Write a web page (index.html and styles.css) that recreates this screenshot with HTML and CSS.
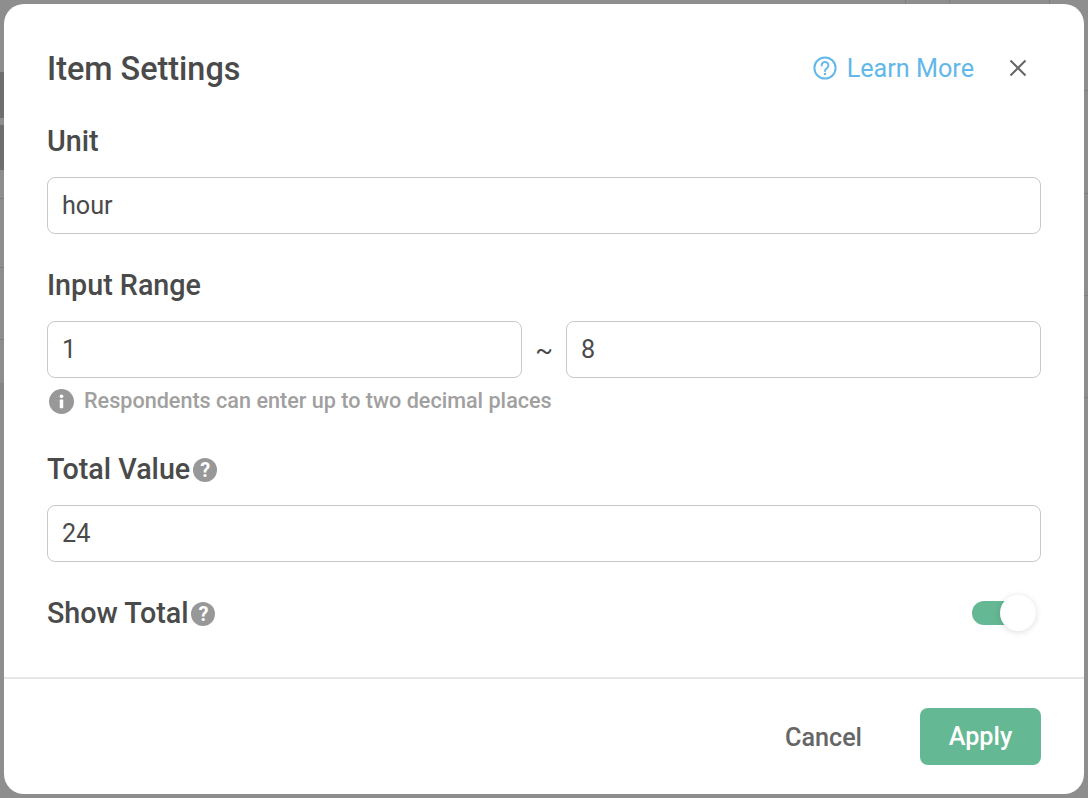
FILE: index.html
```html
<!DOCTYPE html>
<html lang="en">
<head>
	<meta charset="UTF-8">
	<title>Item Settings</title>
	<link rel="stylesheet" href="styles.css">
</head>
<body>
	<div class="modal">
		<div class="modal-body">
			<div class="modal-head">
				<h2 class="title">Item Settings</h2>
				<a class="learn">
					<svg class="learn-icon" viewBox="0 0 24 24" fill="none" stroke="#62b8e8" stroke-width="2" stroke-linecap="round">
						<circle cx="12" cy="12" r="10.6"/>
						<path d="M8.6 9.4a3.4 3.4 0 1 1 5.2 2.9c-1.2.8-1.8 1.3-1.8 2.6"/>
						<circle cx="12" cy="18" r="1.2" fill="#62b8e8" stroke="none"/>
					</svg>
					Learn More
				</a>
				<svg class="close" viewBox="0 0 18 18" fill="none" stroke="#666" stroke-width="2">
					<path d="M1.5 1.5l15 15M16.5 1.5l-15 15"/>
				</svg>
			</div>

			<label class="label label-unit">Unit</label>
			<div class="field">hour</div>

			<label class="label label-range">Input Range</label>
			<div class="range">
				<div class="field">1</div>
				<span class="tilde">~</span>
				<div class="field">8</div>
			</div>
			<div class="hint">
				<svg class="hint-icon" viewBox="0 0 26 26">
					<circle cx="13" cy="13" r="13" fill="#989898"/>
					<circle cx="13" cy="7.6" r="1.9" fill="#fff"/>
					<rect x="11.2" y="11" width="3.6" height="9" rx=".6" fill="#fff"/>
				</svg>
				Respondents can enter up to two decimal places
			</div>

			<label class="label label-total">Total Value<span class="qmark">?</span></label>
			<div class="field">24</div>

			<div class="show-row">
				<label class="label">Show Total<span class="qmark">?</span></label>
				<div class="switch"><span class="knob"></span></div>
			</div>
		</div>

		<div class="modal-foot">
			<button class="btn btn-cancel">Cancel</button>
			<button class="btn btn-apply">Apply</button>
		</div>
	</div>
</body>
</html>
```

FILE: styles.css
```css
*{
	margin: 0;
	padding: 0;
	box-sizing: border-box;
}
html,body{
	height: 100%;
}
body{
	/* the dimmed page behind the dialog, only its edges show */
	background:
		linear-gradient(#6e6e6e,#6e6e6e) 0 72px/4px 46px no-repeat,
		linear-gradient(#6e6e6e,#6e6e6e) 0 125px/4px 45px no-repeat,
		linear-gradient(#7f7f7f,#7f7f7f) 0 198px/4px 1px no-repeat,
		linear-gradient(#7f7f7f,#7f7f7f) 0 267px/4px 1px no-repeat,
		linear-gradient(#7f7f7f,#7f7f7f) 0 339px/4px 1px no-repeat,
		linear-gradient(#868686,#868686) 0 383px/4px 17px no-repeat,
		linear-gradient(#7f7f7f,#7f7f7f) 1084px 90px/4px 1px no-repeat,
		linear-gradient(#7f7f7f,#7f7f7f) 1084px 193px/4px 1px no-repeat,
		linear-gradient(#7f7f7f,#7f7f7f) 1084px 295px/4px 1px no-repeat,
		linear-gradient(#7f7f7f,#7f7f7f) 1084px 397px/4px 1px no-repeat,
		linear-gradient(#7f7f7f,#7f7f7f) 905px 0/1px 4px no-repeat,
		linear-gradient(#7f7f7f,#7f7f7f) 949px 0/1px 4px no-repeat,
		linear-gradient(#7f7f7f,#7f7f7f) 1049px 0/1px 4px no-repeat,
		#8e8e8e;
	padding: 4px;
	font-family: Roboto, "Liberation Sans", sans-serif;
	color: #4a4a4a;
	overflow: hidden;
}
.modal{
	height: 790px;
	background: #fff;
	border-radius: 20px;
	display: flex;
	flex-direction: column;
}
.modal-body{
	flex: 1;
	padding: 45px 43px 0;
}
.modal-head{
	display: flex;
	align-items: center;
	height: 40px;
}
.title{
	flex: 1;
	font-size: 32.4px;
	font-weight: 500;
	line-height: 40px;
}
.learn{
	display: flex;
	align-items: center;
	gap: 10px;
	margin-bottom: 2px;
	font-size: 25.2px;
	color: #62b8e8;
}
.learn-icon{
	width: 24px;
	height: 24px;
}
.close{
	width: 18px;
	height: 18px;
	margin: 0 14px 2px 35px;
}
.label{
	display: block;
	font-size: 28.7px;
	font-weight: 500;
	line-height: 36px;
}
.label-unit{
	margin-top: 34px;
	margin-bottom: 18px;
}
.label-range{
	margin-top: 33px;
	margin-bottom: 18px;
}
.label-total{
	margin-top: 36px;
	margin-bottom: 18px;
}
.field{
	flex: 1;
	height: 57px;
	border: 1px solid #c8c8c8;
	border-radius: 8px;
	padding: 0 14px;
	font-size: 25.2px;
	line-height: 55px;
}
.range{
	display: flex;
	align-items: center;
}
.tilde{
	width: 44px;
	text-align: center;
	font-size: 26px;
}
.hint{
	display: flex;
	align-items: center;
	gap: 10px;
	margin-top: 9px;
	margin-left: 2px;
	font-size: 21.6px;
	font-weight: 500;
	line-height: 28px;
	color: #a0a0a0;
}
.hint-icon{
	width: 25px;
	height: 25px;
}
.qmark{
	display: inline-block;
	width: 24px;
	height: 24px;
	margin-left: 3px;
	border-radius: 50%;
	background: #989898;
	color: #fff;
	font-size: 20px;
	font-weight: 700;
	line-height: 24px;
	text-align: center;
	vertical-align: 2px;
}
.show-row{
	display: flex;
	align-items: center;
	justify-content: space-between;
	margin-top: 33px;
}
.switch{
	position: relative;
	width: 48px;
	height: 24px;
	margin-right: 21px;
	background: #65b894;
	border-radius: 12px;
}
.knob{
	position: absolute;
	top: -6px;
	left: 28px;
	width: 36px;
	height: 36px;
	background: #fff;
	border-radius: 50%;
	box-shadow: 0 1px 6px rgba(0,0,0,.14);
}
.modal-foot{
	height: 117px;
	border-top: 2px solid #e6e6e6;
	display: flex;
	justify-content: flex-end;
	align-items: flex-start;
	padding: 29px 43px 0 0;
	gap: 43px;
}
.btn{
	height: 57px;
	border: 0;
	border-radius: 8px;
	background: none;
	font-family: inherit;
	font-size: 25.2px;
	font-weight: 500;
}
.btn-cancel{
	width: 107px;
	padding-top: 2px;
	color: #666;
}
.btn-apply{
	width: 121px;
	background: #65b894;
	color: #fff;
}
```
